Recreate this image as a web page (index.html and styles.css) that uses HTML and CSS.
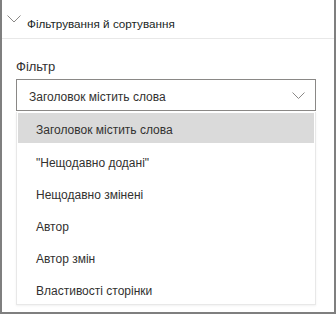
FILE: index.html
```html
<!DOCTYPE html>
<html lang="uk">
<head>
  <meta charset="UTF-8">
  <title>Фільтрування й сортування</title>
  <link rel="stylesheet" href="styles.css">
</head>
<body>
  <div class="panel">
    <div class="section-header">
      <svg class="header-chevron" width="14" height="8" viewBox="0 0 14 8">
        <path d="M0.5 0.5 L7 7 L13.5 0.5" fill="none" stroke="#8a8886" stroke-width="1"/>
      </svg>
      <span class="section-title">Фільтрування й сортування</span>
    </div>

    <div class="section-body">
      <label class="field-label">Фільтр</label>
      <div class="dropdown">
        <span class="dropdown-value">Заголовок містить слова</span>
        <svg class="dropdown-chevron" width="13" height="7" viewBox="0 0 13 7">
          <path d="M0.5 0.5 L6.5 6.5 L12.5 0.5" fill="none" stroke="#8a8886" stroke-width="1"/>
        </svg>
      </div>
      <ul class="dropdown-list">
        <li class="option selected">Заголовок містить слова</li>
        <li class="option">"Нещодавно додані"</li>
        <li class="option">Нещодавно змінені</li>
        <li class="option">Автор</li>
        <li class="option">Автор змін</li>
        <li class="option">Властивості сторінки</li>
      </ul>
    </div>
  </div>
</body>
</html>
```

FILE: styles.css
```css
* {
  box-sizing: border-box;
}

body {
  margin: 0;
  font-family: 'Liberation Sans', Arial, sans-serif;
  color: #323130;
  background: white;
}

.panel {
  width: 336px;
  height: 314px;
  border: 2px solid #7f7f7f;
  border-top: none;
  overflow: hidden;
}

.section-header {
  display: flex;
  align-items: flex-start;
  height: 39px;
  padding-left: 5px;
  border-bottom: 1px solid #e8e8e8;
}

.header-chevron {
  margin: 15px 6px 0 0;
}

.section-title {
  margin-top: 16px;
  font-size: 11.7px;
  line-height: 16px;
  color: #201f1e;
}

.section-body {
  padding: 18px 18px 0 14px;
}

.field-label {
  display: block;
  font-size: 13px;
  line-height: 20px;
  margin-bottom: 2px;
}

.dropdown {
  display: flex;
  align-items: center;
  justify-content: space-between;
  height: 32px;
  padding: 0 10px 0 12px;
  border: 1px solid #8a8886;
  background: white;
}

.dropdown-value {
  font-size: 12px;
  padding-top: 3px;
}

.dropdown-list {
  list-style: none;
  margin: 1px 0 0;
  padding: 1px 1px 0;
  height: 193px;
  border: 1px solid #e8e8e8;
  border-top: none;
  box-shadow: 0 1px 2px rgba(0,0,0,0.06);
}

.option {
  height: 32px;
  padding: 4px 0 0 18px;
  line-height: 28px;
  font-size: 12px;
}

.option.selected {
  height: 30px;
  line-height: 26px;
  margin-bottom: 2px;
  background: #dadada;
}
```
